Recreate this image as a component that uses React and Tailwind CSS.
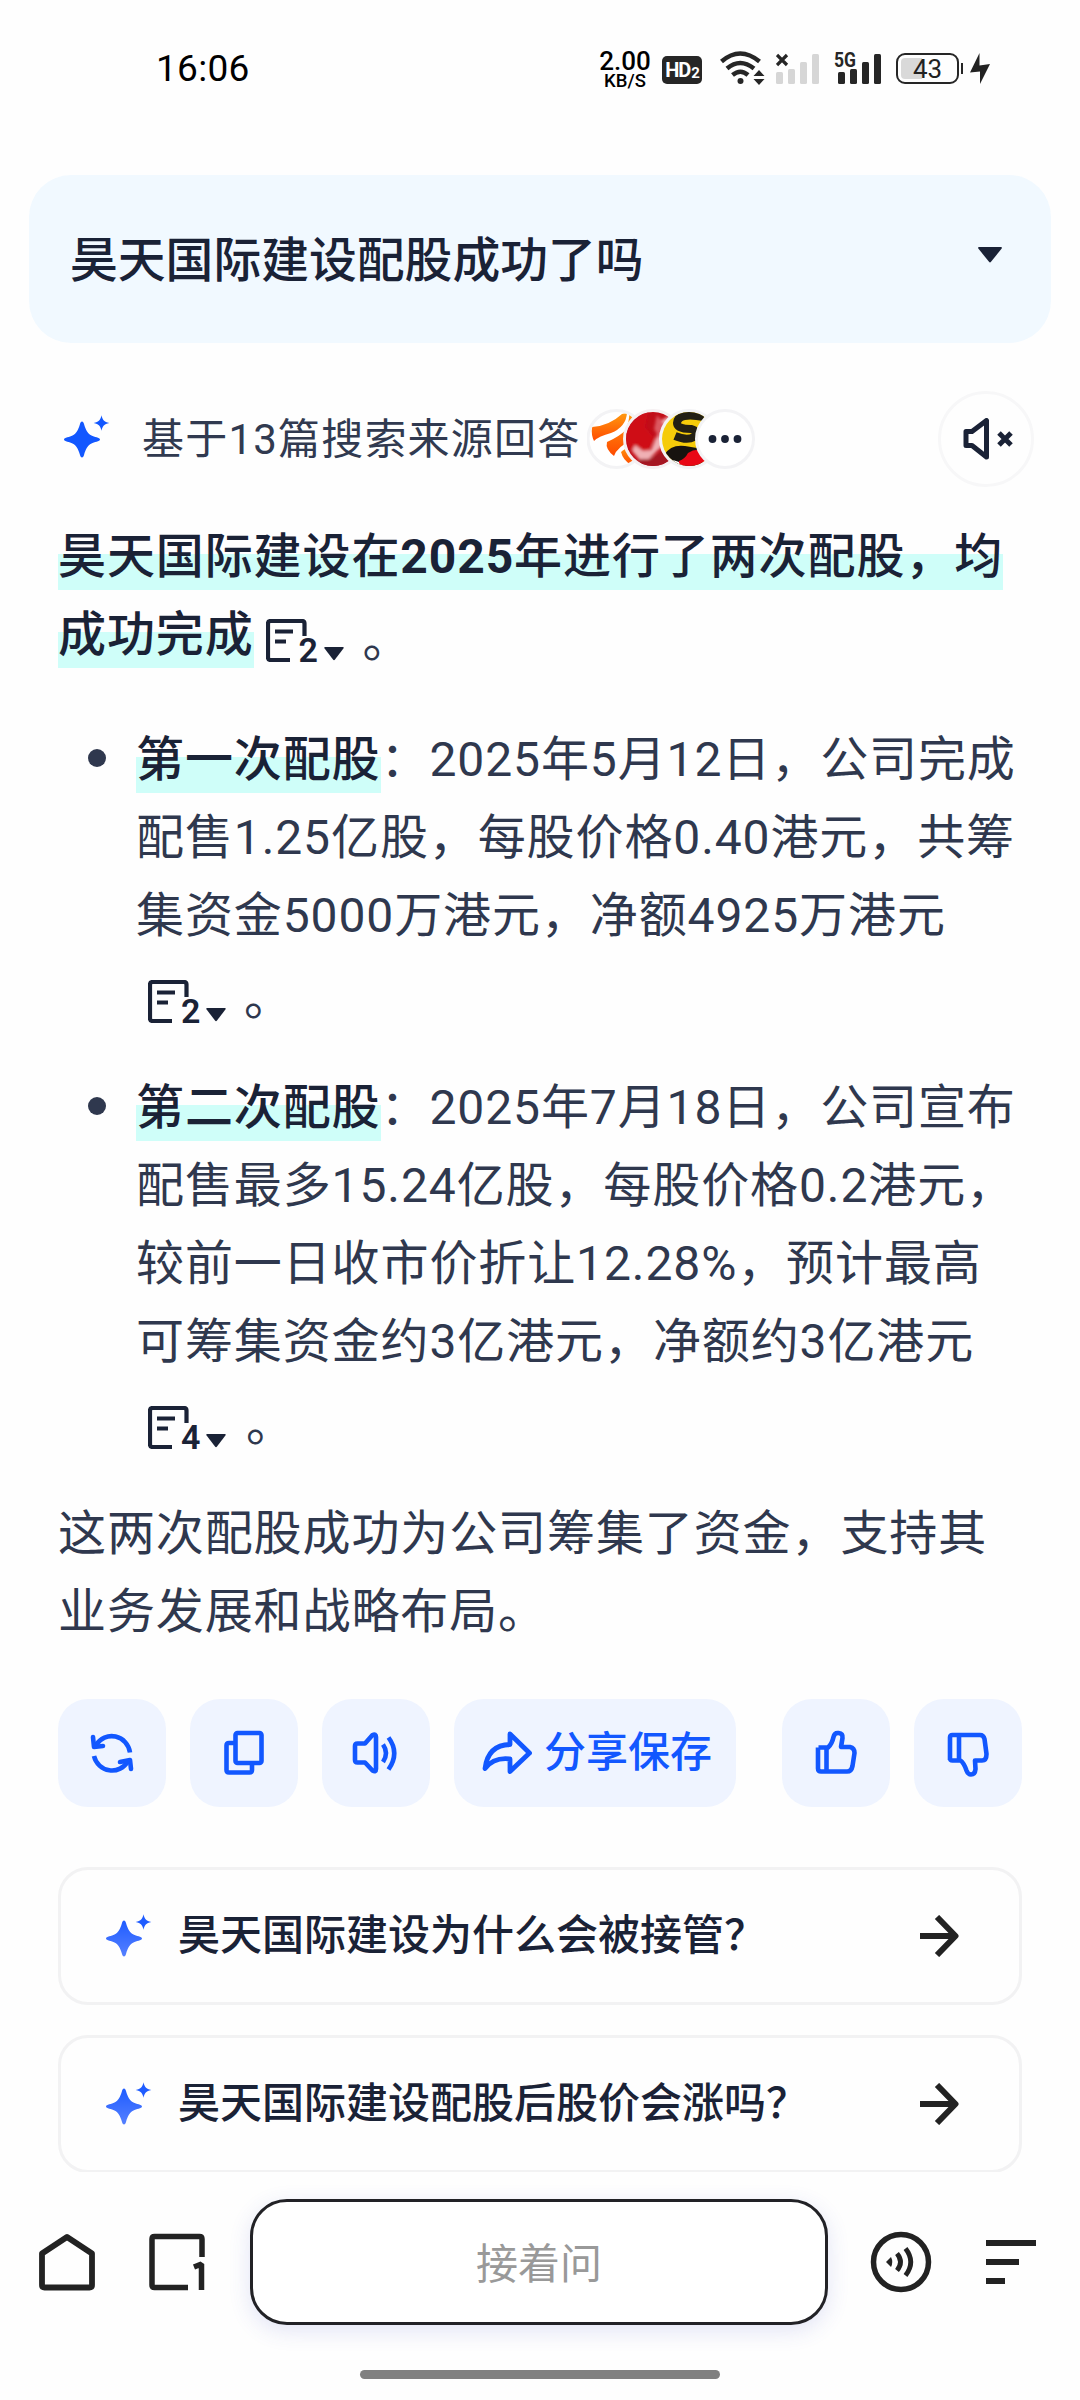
const sourceText = '基于13篇搜索来源回答';

const suggestions = [
  '昊天国际建设为什么会被接管？',
  '昊天国际建设配股后股价会涨吗？',
];

function Mark({ children }) {
  return (
    <strong className="inline-block h-[78px] bg-[linear-gradient(#cffef9,#cffef9)] bg-[length:100%_36px] bg-[position:0_36px] bg-no-repeat align-top font-medium text-[#1a2236]">
      {children}
    </strong>
  );
}

function Sparkle({ from = '#1257ff', to = '#1257ff', id }) {
  return (
    <svg width="46" height="44" viewBox="0 0 46 44" className="shrink-0">
      <defs>
        <linearGradient id={id} x1="0" y1="0" x2="0" y2="1">
          <stop offset="0" stopColor={from} />
          <stop offset="1" stopColor={to} />
        </linearGradient>
      </defs>
      <path fill={`url(#${id})`} d="M18 6.500C19 6.500 19.600 7.500 20 9C21.800 15 23.500 18.500 27.500 20.500C30 22 36 22.500 36 24.500C36 26.500 30 27 27.500 28.500C23.500 30.500 21.800 34 20 40C19.600 41.500 19 42.500 18 42.500C17 42.500 16.400 41.500 16 40C14.200 34 12.500 30.500 8.500 28.500C6 27 0 26.500 0 24.500C0 22.500 6 22 8.500 20.500C12.500 18.500 14.200 15 16 9C16.400 7.500 17 6.500 18 6.500Z" />
      <path fill={from} d="M37.500 0.300C38.600 5 40 6.800 45.300 8C40 9.200 38.600 11 37.500 15.700C36.400 11 35 9.200 29.700 8C35 6.800 36.400 5 37.500 0.300Z" />
    </svg>
  );
}

function Cite({ n }) {
  return (
    <span className="inline-flex h-[44px] items-end text-[#1a2236]">
      <svg width="41" height="43" viewBox="0 0 41 43" fill="none" stroke="currentColor" strokeWidth="4.200">
        <path d="M38.500 17V4.500Q38.500 2 36 2H4.500Q2 2 2 4.500V38.500Q2 41 4.500 41H24" />
        <path d="M9 12.500H27M9 22.500H20" />
      </svg>
      <span className="-ml-[8px] h-[30px] w-[19px] text-[34px] leading-[36px] font-semibold tracking-normal">{n}</span>
      <svg width="20" height="14" viewBox="0 0 20 14" className="mb-px ml-[6px]">
        <path d="M1 0H19Q20.200 0.300 19.400 1.500L11 12.500Q10 13.800 9 12.500L0.600 1.500Q-0.200 0.300 1 0Z" fill="currentColor" />
      </svg>
    </span>
  );
}

function StatusBar() {
  return (
    <div className="flex h-[138px] items-start pt-[50px] pl-[156px] text-[#222]">
      <span className="w-[444px] text-[37px] leading-[38px] tracking-[0.3px] text-black">16:06</span>
      <div className="-mt-px flex w-[50px] flex-col items-center text-black">
        <span className="text-[26px] leading-[24px] font-medium">2.00</span>
        <span className="text-[18.500px] leading-[16px] font-medium">KB/S</span>
      </div>
      <div className="mt-[6px] ml-[12px] flex h-[28px] w-[40px] items-center justify-center rounded-[5px] bg-[#262626] text-[20px] leading-none font-bold tracking-[-1px] text-white">
        HD<span className="mt-[7px] ml-px text-[15px]">2</span>
      </div>
      <svg className="mt-px ml-[18px]" width="45" height="34" viewBox="0 0 45 34" fill="none" stroke="#262626" strokeWidth="4.500">
        <path d="M1.500 10.500Q20 -5.500 39.500 10.500M7 17.500Q20 6.500 34 17.500M12.500 24Q20.500 17.500 28 24" />
        <circle cx="20.500" cy="30" r="3" fill="#262626" stroke="none" />
        <path d="M33.500 25L39 19L44.500 25ZM33.500 28L39 34L44.500 28Z" fill="#262626" stroke="none" />
      </svg>
      <svg className="mt-px ml-[11px]" width="44" height="34" viewBox="0 0 44 34">
        <path d="M1 4L11 14M11 4L1 14" stroke="#262626" strokeWidth="3.200" />
        <g fill="#d6d6d6">
          <rect x="0" y="21" width="7" height="12" rx="1.500" />
          <rect x="12" y="18" width="7" height="15" rx="1.500" />
          <rect x="24" y="11" width="7" height="22" rx="1.500" />
          <rect x="36" y="3" width="7" height="30" rx="1.500" />
        </g>
      </svg>
      <svg className="mt-px ml-[14px] overflow-visible" width="48" height="34" viewBox="0 0 48 34" fill="#262626">
        <text x="0" y="16" fontSize="21" fontWeight="700" textLength="22" lengthAdjust="spacingAndGlyphs">5G</text>
        <rect x="4" y="21" width="7" height="12" rx="1.500" />
        <rect x="16" y="18" width="7" height="15" rx="1.500" />
        <rect x="28" y="11" width="7" height="22" rx="1.500" />
        <rect x="40" y="3" width="7" height="30" rx="1.500" />
      </svg>
      <div className="mt-[3px] ml-[14px] flex h-[31px] w-[63px] items-center justify-center rounded-[9px] border-[2.500px] border-[#262626] bg-[linear-gradient(90deg,#d9d9d9_24px,transparent_24px)] bg-clip-content p-[3px] text-[26px] leading-none">
        43
      </div>
      <div className="mt-[13px] ml-[2px] h-[11px] w-[2px] bg-[#262626]" />
      <svg className="mt-[3px] ml-[7px]" width="20" height="31" viewBox="0 0 20 31" fill="#222">
        <path d="M9.500 0V12.500L20 11L10 31V18.500L0 19.500Z" />
      </svg>
    </div>
  );
}

function Sources() {
  return (
    <svg width="170" height="60" viewBox="0 0 170 60" className="ml-[8px] shrink-0">
      <defs>
        <clipPath id="s1"><circle cx="29.500" cy="30" r="27" /></clipPath>
        <clipPath id="s2"><circle cx="66" cy="30" r="27" /></clipPath>
        <clipPath id="s3"><circle cx="102" cy="30" r="27" /></clipPath>
        <linearGradient id="orange" x1="0" y1="0" x2="0" y2="1">
          <stop offset="0" stopColor="#ff9a10" />
          <stop offset="1" stopColor="#ff4a00" />
        </linearGradient>
        <filter id="soft"><feGaussianBlur stdDeviation="1.600" /></filter>
      </defs>
      <circle cx="29.500" cy="30" r="28.500" fill="#fff" stroke="#f3f3f5" strokeWidth="3" />
      <g clipPath="url(#s1)" fill="url(#orange)">
        <path d="M5 18Q22 17 35 5L40 4Q39 18 24 24Q12 27 7 32Q4 26 5 18Z" />
        <path d="M42 3L46 6Q45 22 20 33Q18 40 27 47Q30 38 46 30V12Q42 20 38 22Q43 12 42 3Z" />
        <path d="M34 43Q38 39 46 37V56H44Q36 51 34 43Z" />
      </g>
      <circle cx="66" cy="30" r="28.500" fill="#fff" stroke="#f5f0f2" strokeWidth="3" />
      <g clipPath="url(#s2)">
        <path d="M38 0H96V60H38Z" fill="#c10d18" />
        <g filter="url(#soft)">
          <path d="M62 0L58 18L68 30L60 45L42 40L36 20Z" fill="#cf0a18" />
          <path d="M73 12L84 6V30L70 42L60 52L52 50L45 42L48 36L56 42L64 41L70 27Z" fill="#f0b0b4" />
          <path d="M70 6L78 16L73 30L67 20Z" fill="#dc5860" />
          <path d="M52 50L62 50L80 40L84 60H50Z" fill="#a51420" />
        </g>
      </g>
      <circle cx="102" cy="30" r="28.500" fill="#fff" stroke="#f3f3f5" strokeWidth="3" />
      <g clipPath="url(#s3)">
        <path d="M74 0H132V60H74Z" fill="#f5cb0a" />
        <path d="M117 8Q91 3 90 14Q90 20 104 20Q112 22 107 28Q100 32 88 27" fill="none" stroke="#221f14" strokeWidth="8" />
        <path d="M77 46Q84 35 98 37L116 40V60H77Z" fill="#17130f" />
        <path d="M78 52Q91 49 102 60H78Z" fill="#fff" />
        <path d="M101 44Q110 38 118 43V60H98Q91 55 92 52Q98 50 101 44Z" fill="#e90716" />
      </g>
      <circle cx="138" cy="30" r="28.500" fill="#fff" stroke="#f3f3f5" strokeWidth="3" />
      <g fill="#1a2236">
        <circle cx="125.500" cy="30" r="3.900" />
        <circle cx="138" cy="30" r="3.900" />
        <circle cx="150.500" cy="30" r="3.900" />
      </g>
    </svg>
  );
}

function ActionButton({ children, className = 'w-[108px]' }) {
  return (
    <button className={`flex h-[108px] items-center justify-center rounded-[30px] bg-[#eff4ff] text-[#1257ff] ${className}`}>
      {children}
    </button>
  );
}

function Icon({ children }) {
  return (
    <svg width="48" height="48" viewBox="0 0 48 48" fill="none" stroke="currentColor" strokeWidth="4.600" strokeLinejoin="round">
      {children}
    </svg>
  );
}

function Actions() {
  return (
    <div className="mt-[48px] flex gap-[24px]">
      <ActionButton>
        <Icon>
          <path d="M42 23.500A18.500 19 0 0 0 8 16M6 27A18.500 19 0 0 0 40 32" />
          <path d="M5 8L6 18L15 17M32 33L42 31L43 40" strokeLinecap="round" />
        </Icon>
      </ActionButton>
      <ActionButton>
        <Icon>
          <rect x="15.500" y="4" width="26" height="30" rx="2" />
          <path d="M15.500 14H9Q6.500 14 6.500 16.500V41Q6.500 43.500 9 43.500H29.500Q32 43.500 32 41V34" />
        </Icon>
      </ActionButton>
      <ActionButton>
        <Icon>
          <path d="M3 17Q3 14.500 5.500 14.500H13L20.500 6Q24 4.500 24 8V40Q24 43.500 20.500 41.500L13 33.500H5.500Q3 33.500 3 31Z" />
          <path d="M31 15.500Q37 24 31 33M36.500 8.500Q48 24 36.500 40.500" />
        </Icon>
      </ActionButton>
      <ActionButton className="w-[282px] gap-[12px] pl-[4px]">
        <svg width="50" height="44" viewBox="0 0 50 44" fill="none" stroke="currentColor" strokeWidth="4.800" strokeLinejoin="round">
          <path d="M28 3L47.500 22L28 40.500V28Q12 26 3 37.500Q6 14 28 13.500Z" />
        </svg>
        <span className="text-[42px] font-medium tracking-normal">分享保存</span>
      </ActionButton>
      <ActionButton className="ml-[22px] w-[108px]">
        <Icon>
          <path d="M6.500 18.500H16Q20 15 21.500 8Q22.500 3.500 26.500 4Q31 4.500 30.500 9L29 18H38Q42.500 19 42.500 24L40.500 37Q39.500 42.500 35 42.500H9Q6 42.500 6 39.500V18.500M14.500 18.500V42" />
        </Icon>
      </ActionButton>
      <ActionButton>
        <Icon>
          <path d="M6 31V8.500Q6 6 8.500 6H36Q39.500 6 40.500 10L42.500 25Q42.500 31.500 38 31.500H31L31.500 40Q31 45.500 27 45.500Q24 45.500 22.500 41.500Q20 34 16.500 31.500H8.500Q6 31.500 6 29M15 6V31" />
        </Icon>
      </ActionButton>
    </div>
  );
}

function BottomBar() {
  return (
    <div className="flex h-[228px] flex-col bg-[#fefefe]">
      <div className="mt-[27px] flex h-[126px] items-center text-[#222]">
        <svg className="ml-[38px]" width="58" height="58" viewBox="0 0 58 58" fill="none" stroke="currentColor" strokeWidth="5.800" strokeLinejoin="round">
          <path d="M4 20.500L29 4L54 20.500V52Q54 54.500 51.500 54.500H6.500Q4 54.500 4 52Z" />
        </svg>
        <svg className="ml-[53px]" width="57" height="58" viewBox="0 0 57 58" fill="none" stroke="currentColor" strokeWidth="5.500">
          <path d="M53 24V6Q53 3.500 50.500 3.500H5.500Q3 3.500 3 6V52Q3 54.500 5.500 54.500H39" />
          <path d="M45 34L52.500 31V57" strokeLinejoin="bevel" />
        </svg>
        <div className="ml-[44px] flex h-[126px] w-[578px] items-center justify-center rounded-[37px] border-[3px] border-[#222226] bg-white pt-[4px] text-[42px] text-[#999] shadow-[0_6px_22px_rgba(60,70,190,0.14)]">
          接着问
        </div>
        <svg className="ml-[42px]" width="62" height="62" viewBox="0 0 62 62" fill="none" stroke="currentColor" strokeWidth="5.500">
          <circle cx="31" cy="31" r="27.500" />
          <path d="M16 31L21 26Q23.500 31 21 36Z" fill="currentColor" stroke="none" />
          <path d="M27 22.500Q34 31 27 39.500M35.500 17.500Q46 31 35.500 44.500" strokeWidth="4.800" />
        </svg>
        <div className="ml-[54px] flex flex-col gap-[13px]">
          <div className="h-[6px] w-[50px] bg-[#222]" />
          <div className="h-[6px] w-[33px] bg-[#222]" />
          <div className="h-[6px] w-[19px] bg-[#222]" />
        </div>
      </div>
      <div className="mt-[45px] h-[9px] w-[360px] self-center rounded-full bg-[#808080]" />
    </div>
  );
}

export default function App() {
  return (
    <div className='flex h-[2400px] w-[1080px] flex-col overflow-hidden bg-[#fefefe] font-[Roboto,"Noto_Sans_CJK_SC",sans-serif]'>
      <StatusBar />

      <div className="flex h-[2034px] flex-col overflow-hidden pt-[37px]">
        {/* Question */}
        <div className="mx-[29px] flex h-[168px] shrink-0 items-center justify-between rounded-[42px] bg-[#f1f9ff] pr-[49px] pl-[41px] text-[#1a2236]">
          <h1 className="pt-[3px] text-[47.800px] leading-[78px] font-medium">昊天国际建设配股成功了吗</h1>
          <svg width="24" height="16" viewBox="0 0 24 16" className="-mt-[9px]">
            <path d="M1 0H23Q24.500 0.300 23.500 1.800L13 14.800Q12 16 11 14.800L0.500 1.800Q-0.500 0.300 1 0Z" fill="currentColor" />
          </svg>
        </div>

        {/* Source row */}
        <div className="mt-[48px] flex h-[96px] shrink-0 items-center pl-[64px]">
          <div className="-mt-[4px]"><Sparkle id="spark-top" /></div>
          <span className="ml-[32px] w-[437px] text-[42px] tracking-[1.2px] whitespace-nowrap text-[#313a50]">{sourceText}</span>
          <Sources />
          <div className="mr-[46px] ml-auto flex h-[96px] w-[96px] items-center justify-center rounded-full border-[3px] border-[#f7f7f8] text-[#1a2236]">
            <svg width="50" height="42" viewBox="0 0 50 42" fill="none" stroke="currentColor" strokeWidth="5" strokeLinejoin="round" className="ml-[3px]">
              <path d="M3 13.500H9L23.500 2.500V39L9 27.500H3Z" />
              <path d="M36 15L48 27M48 15L36 27" />
            </svg>
          </div>
        </div>

        {/* Answer */}
        <div className="mt-[31px] flex flex-col px-[58px] text-[48px] leading-[78px] tracking-[0.9px] whitespace-nowrap text-[#2f384e]">
          <div className="flex flex-col">
            <div className="flex h-[78px]"><Mark>昊天国际建设在<b className="font-bold">2025</b>年进行了两次配股，均</Mark></div>
            <div className="flex h-[78px] items-start">
              <Mark>成功完成</Mark>
              <span className="mt-[22px] ml-[12px] flex"><Cite n={2} /></span>
              <span className="mt-[6px] ml-[19px]">。</span>
            </div>
          </div>

          <ul className="mt-[47px] flex flex-col gap-[22px]">
            <li className="flex">
              <span className="mt-[28px] mr-[30px] ml-[30px] h-[18px] w-[18px] rounded-full bg-[#2f384e]" />
              <div>
                <p><Mark>第一次配股</Mark>：2025年5月12日，公司完成</p>
                <p>配售1.25亿股，每股价格0.40港元，共筹</p>
                <p>集资金5000万港元，净额4925万港元</p>
                <p className="flex h-[92px] items-center pl-[12px]"><Cite n={2} /><span className="-mt-[4px] ml-[18px]">。</span></p>
              </div>
            </li>
            <li className="flex">
              <span className="mt-[28px] mr-[30px] ml-[30px] h-[18px] w-[18px] rounded-full bg-[#2f384e]" />
              <div>
                <p><Mark>第二次配股</Mark>：2025年7月18日，公司宣布</p>
                <p>配售最多15.24亿股，每股价格0.2港元，</p>
                <p>较前一日收市价折让12.28%，预计最高</p>
                <p>可筹集资金约3亿港元，净额约3亿港元</p>
                <p className="flex h-[92px] items-center pl-[12px]"><Cite n={4} /><span className="-mt-[4px] ml-[20px]">。</span></p>
              </div>
            </li>
          </ul>

          <p className="mt-[22px]">这两次配股成功为公司筹集了资金，支持其</p>
          <p>业务发展和战略布局。</p>

          <Actions />

          {/* Follow-up questions */}
          <div className="mt-[60px] flex flex-col gap-[30px] tracking-normal">
            {suggestions.map((text, i) => (
              <button key={text} className="flex h-[138px] shrink-0 items-center rounded-[30px] border-[3px] border-[#f2f2f3] pr-[60px] pl-[45px] text-[#1a2236]">
                <Sparkle id={`spark-${i}`} from="#1f5cff" to="#5580ff" />
                <span className="ml-[26px] text-[42px] font-medium">{text}</span>
                <svg className="ml-auto" width="40" height="42" viewBox="0 0 40 42" fill="none" stroke="#222" strokeWidth="6">
                  <path d="M1 21H36M18 2L36.500 21L18 40" strokeLinejoin="round" />
                </svg>
              </button>
            ))}
          </div>
        </div>
      </div>

      <BottomBar />
    </div>
  );
}
